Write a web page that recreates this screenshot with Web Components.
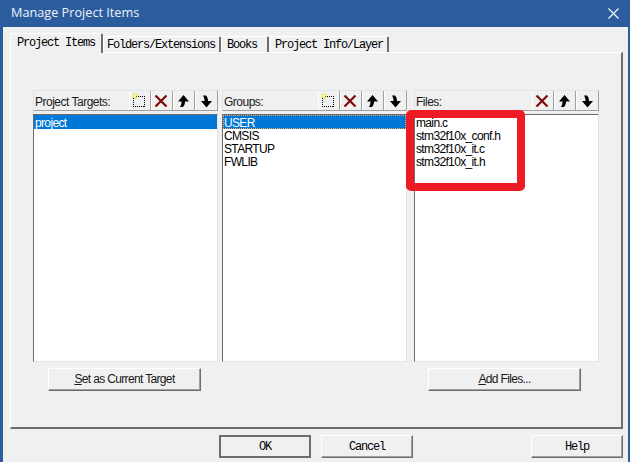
<!DOCTYPE html>
<html>
<head>
<meta charset="utf-8">
<title>Manage Project Items</title>
<style>
html, body { margin: 0; padding: 0; background: #f0f0f0; }
</style>
</head>
<body>

<manage-dialog>
  <dialog-tabs>
    <tab-label active>Project Items</tab-label>
    <tab-label style="padding:1px 4px 0 3px">Folders/Extensions</tab-label>
    <tab-label style="padding:1px 10px 0 5px">Books</tab-label>
    <tab-label style="padding:1px 4px 0 4px;margin-left:1px">Project Info/Layer</tab-label>
  </dialog-tabs>
  <list-panel title="Project Targets:" tools="new,del,up,down" button="Set as Current Target" hotkey="S" offset="15">
    <list-row selected>project</list-row>
  </list-panel>
  <list-panel title="Groups:" tools="new,del,up,down">
    <list-row selected focused>USER</list-row>
    <list-row>CMSIS</list-row>
    <list-row>STARTUP</list-row>
    <list-row>FWLIB</list-row>
  </list-panel>
  <list-panel title="Files:" tools="del,up,down" button="Add Files..." hotkey="A" offset="14">
    <list-row>main.c</list-row>
    <list-row>stm32f10x_conf.h</list-row>
    <list-row>stm32f10x_it.c</list-row>
    <list-row>stm32f10x_it.h</list-row>
  </list-panel>
</manage-dialog>

<script>
// the dialog frame: title bar, tabs, page with three columns, footer buttons
class ManageDialog extends HTMLElement {
    constructor() {
        super();
        this.attachShadow({mode: 'open'}).innerHTML = `<style>
            :host { display: block; width: 630px; height: 462px; box-sizing: border-box; position: relative; overflow: hidden;
                background: #f0f0f0; border-left: 3px solid #2b5c9e; border-right: 2px solid #2b5c9e; font-family: "Liberation Sans", Arial, sans-serif; }
            .edge { position: absolute; left: -3px; top: 0; bottom: 0; width: 1px; background: #9fa9b8; }
            .title { box-sizing: border-box; height: 27px; margin: 0 -2px 0 -3px; background: #2b5c9e; color: #eef3f9; display: flex; align-items: center; justify-content: space-between;
                font: 12.7px "Open Sans", "Liberation Sans", sans-serif; padding: 0 10px 3px 11px; }
            .title svg { display: block; margin: 3px 1px 0 0; }
            .body { padding: 7px 5px 0 7px; }
            .page { box-sizing: border-box; height: 377px; padding: 37px 0 0 22px; display: flex; gap: 4px;
                border: 1px solid; border-width: 1px 2px 2px 1px; border-color: #fff #6d6d6d #6d6d6d #fff; }
            .foot { display: flex; padding: 6px 0 0 209px; }
            .foot dlg-button { margin-right: 10px; }
            .foot dlg-button.help { margin: 0 0 0 auto; }
        </style>
        <div class="title"><span>Manage Project Items</span>
            <svg width="11" height="11" viewBox="0 0 11 11"><path d="M.5.5l10 10M10.5.5l-10 10" stroke="#fff" fill="none" stroke-width="1.1"/></svg>
        </div>
        <div class="body">
            <slot name="tabs"></slot>
            <div class="page"><slot></slot></div>
            <div class="foot">
                <dlg-button mono dark style="width:92px">OK</dlg-button>
                <dlg-button mono style="width:92px">Cancel</dlg-button>
                <dlg-button mono class="help" style="width:92px">Help</dlg-button>
            </div>
        </div>
        <div class="edge"></div>
        <callout-box></callout-box>`;
    }
    connectedCallback() {
        this.querySelector('dialog-tabs').slot = 'tabs';
    }
}

class DialogTabs extends HTMLElement {
    constructor() {
        super();
        this.attachShadow({mode: 'open'}).innerHTML = `<style>
            :host { display: flex; align-items: flex-end; height: 18px; position: relative; z-index: 1; }
        </style><slot></slot>`;
    }
}

class TabLabel extends HTMLElement {
    constructor() {
        super();
        this.attachShadow({mode: 'open'}).innerHTML = `<style>
            :host { display: block; box-sizing: border-box; height: 16px; background: #f0f0f0; color: #000;
                border: 1px solid; border-width: 1px 2px 0 1px; border-color: #fff #6d6d6d #fff #fff; border-radius: 2px 2px 0 0;
                font: 12px/14px "Liberation Mono", monospace; letter-spacing: -1.2px; white-space: nowrap; }
            :host([active]) { height: 20px; margin-bottom: -1px; padding: 2px 6px 0 6px; }
        </style><slot></slot>`;
    }
}

// one column: caption strip with tool buttons, the list, an optional button under it
class ListPanel extends HTMLElement {
    constructor() {
        super();
        this.attachShadow({mode: 'open'});
    }
    connectedCallback() {
        var tools = this.getAttribute('tools').split(',').map((t) => `<tool-button kind="${t}"></tool-button>`).join('');
        var label = this.getAttribute('button');
        var key = this.getAttribute('hotkey');
        var btn = label ? `<dlg-button style="width:153px;margin-left:${this.getAttribute('offset')}px">${label.replace(key, '<u>' + key + '</u>')}</dlg-button>` : '';
        this.shadowRoot.innerHTML = `<style>
            :host { display: block; width: 185px; font-size: 12px; letter-spacing: -.65px; }
            :host(:last-child) { margin-left: 3px; }
            .head { box-sizing: border-box; height: 21px; display: flex; align-items: center; border: 1px solid; border-color: #e3e3e3 #a0a0a0 #a0a0a0 #e3e3e3;
                padding-left: 1px; color: #1a1a1a; letter-spacing: -.5px; }
            .head span { flex: 1; padding-top: 2px; }
            .tools { display: flex; }
            .list { box-sizing: border-box; height: 248px; margin-top: 3px; padding-top: 1px; background: #fff; border: 1px solid; border-color: #6d6d6d #e3e3e3 #e3e3e3 #6d6d6d; }
            .act { display: flex; margin-top: 6px; }
        </style>
        <div class="head"><span>${this.getAttribute('title')}</span><div class="tools">${tools}</div></div>
        <div class="list"><slot></slot></div>
        <div class="act">${btn}</div>`;
    }
}

class ListRow extends HTMLElement {
    constructor() {
        super();
        this.attachShadow({mode: 'open'}).innerHTML = `<style>
            :host { display: block; height: 13px; line-height: 15px; padding-left: 1px; color: #000; white-space: nowrap; }
            :host([selected]) { height: 14px; margin-top: -1px; line-height: 17px; background: #0078d7; color: #fff; }
            :host([focused]) { outline: 1px dotted #f7a35c; outline-offset: -1px; }
        </style><slot></slot>`;
    }
}

class ToolButton extends HTMLElement {
    static get icons() {
        return {
            new: '<path d="M1.500 3.500h11v10h-11z" fill="#f0f0f0" stroke="#000" stroke-dasharray="1 1" shape-rendering="crispEdges"/><path d="M0 3h6M3 0v6M1 1l4 4M5 1L1 5" stroke="#ece51c"/><path d="M2 2h2v2H2z" fill="#fdfbc0"/>',
            del: '<path d="M1.500 2.500l11 11M12.500 2.500l-11 11" stroke="#7c0a0a" stroke-width="2.200" fill="none"/>',
            up: '<path d="M7.500 2L2 8.500h3.500c0 2-.3 3.700-1.500 5.500h3c1.500-1.500 2-3.500 2-5.500H13z" fill="#000"/>',
            down: '<path d="M7.500 14.500L2 8h3.500c0-2-.3-3.500-1.500-5.500h3c1.500 1.500 2 3.500 2 5.500H13z" fill="#000"/>'
        };
    }
    constructor() {
        super();
        this.attachShadow({mode: 'open'});
    }
    connectedCallback() {
        this.shadowRoot.innerHTML = `<style>
            :host { display: flex; justify-content: center; box-sizing: border-box; width: 22px; height: 19px; padding-top: 2px;
                border-left: 1px solid #fff; border-right: 1px solid #a0a0a0; background: #f0f0f0; }
            :host(:last-child) { border-right: 0; }
            svg { display: block; }
        </style><svg width="16" height="16" viewBox="0 0 16 16">${ToolButton.icons[this.getAttribute('kind')]}</svg>`;
    }
}

class DlgButton extends HTMLElement {
    constructor() {
        super();
        this.attachShadow({mode: 'open'}).innerHTML = `<style>
            :host { display: flex; align-items: center; justify-content: center; box-sizing: border-box; height: 23px; padding-bottom: 1px; background: #f0f0f0;
                border: 1px solid; border-color: #fff #6d6d6d #6d6d6d #fff; box-shadow: inset -1px -1px 0 #a0a0a0; color: #1a1a1a; white-space: nowrap; }
            :host([mono]) { padding-bottom: 0; padding-top: 1px; font: 12px "Liberation Mono", monospace; letter-spacing: -1.2px; color: #000; }
            :host([dark]) { border: 2px solid #6d6d6d; box-shadow: none; }
        </style><slot></slot>`;
    }
}

// red annotation drawn over the screenshot
class CalloutBox extends HTMLElement {
    constructor() {
        super();
        this.attachShadow({mode: 'open'}).innerHTML = `<style>
            :host { display: block; position: absolute; left: 403px; top: 110px; width: 119px; height: 81px; box-sizing: border-box;
                border: 8px solid #ed1c24; border-radius: 5px; }
        </style>`;
    }
}

customElements.define('manage-dialog', ManageDialog);
customElements.define('dialog-tabs', DialogTabs);
customElements.define('tab-label', TabLabel);
customElements.define('list-panel', ListPanel);
customElements.define('list-row', ListRow);
customElements.define('tool-button', ToolButton);
customElements.define('dlg-button', DlgButton);
customElements.define('callout-box', CalloutBox);
</script>
</body>
</html>
